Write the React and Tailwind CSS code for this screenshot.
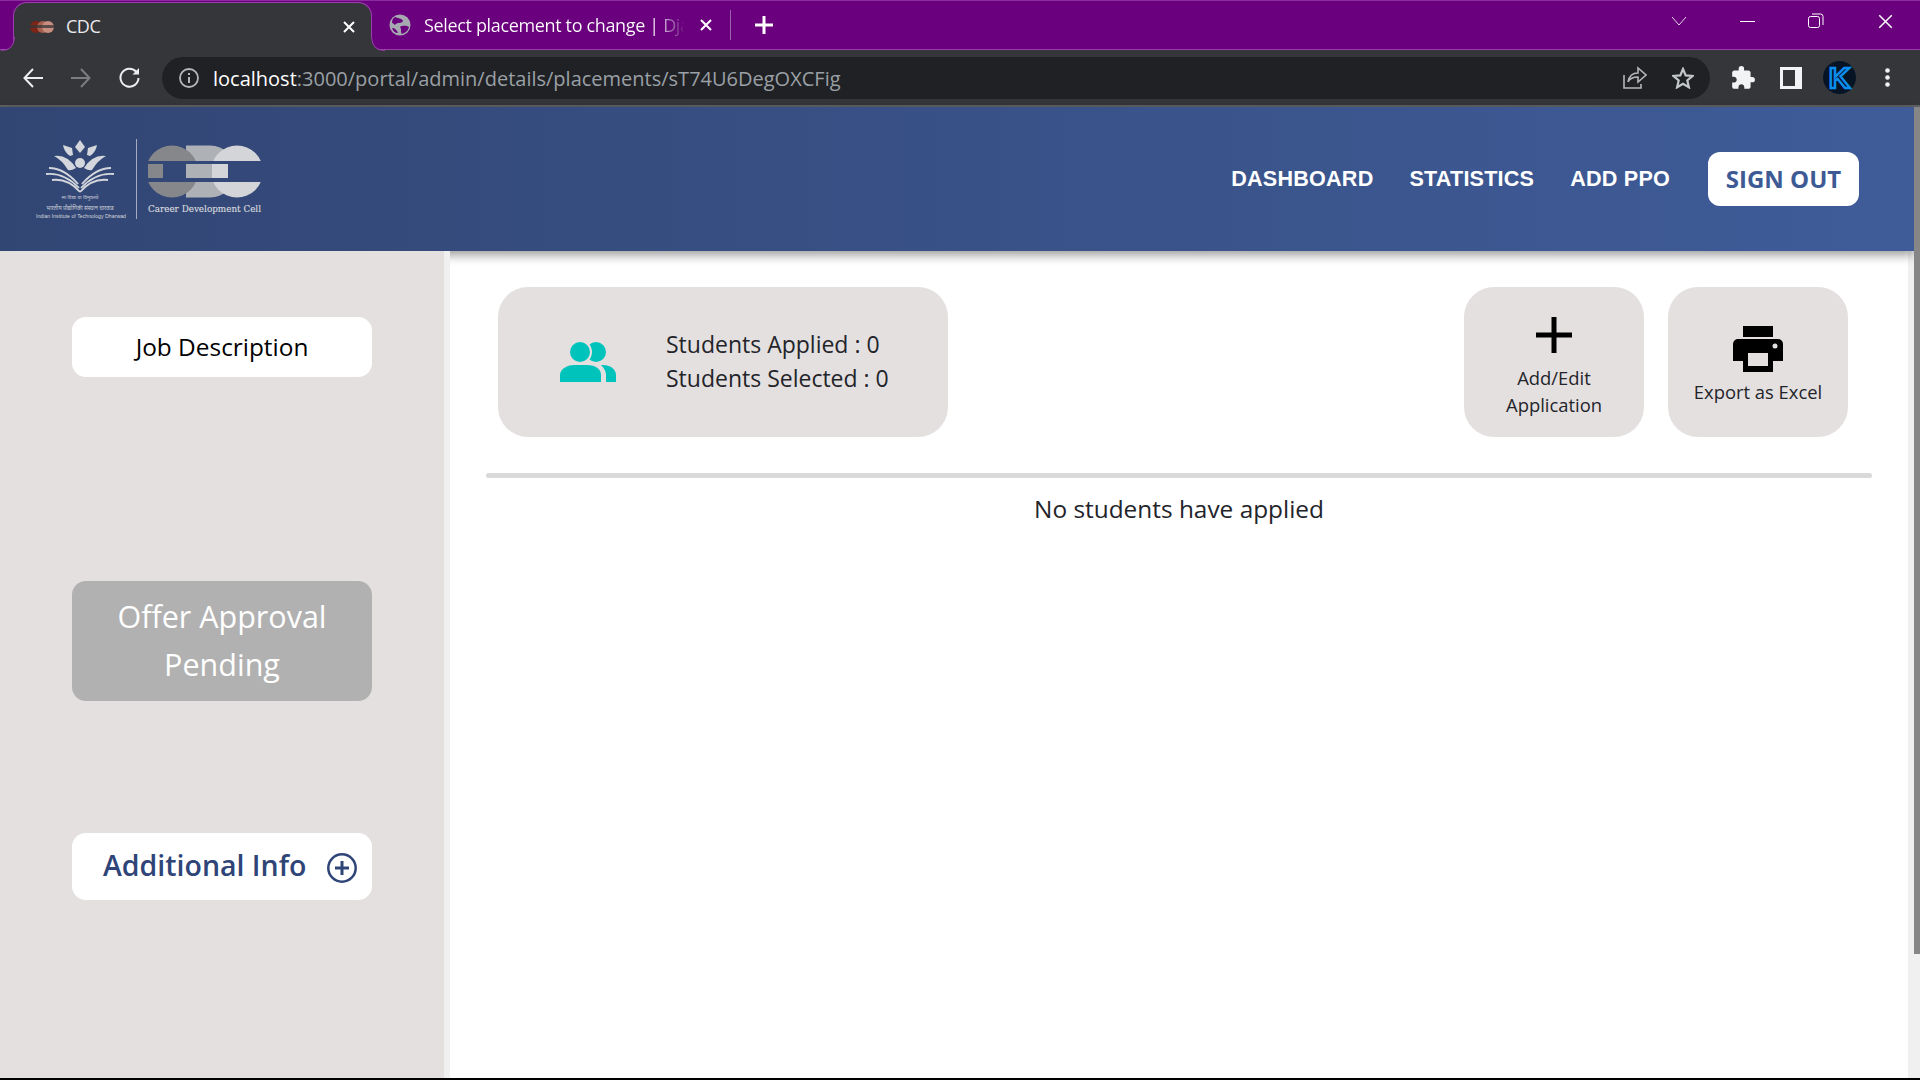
import React from "react";
import { MdExtension } from "react-icons/md";

const Close = ({ size = 12, sw = 2 }) => (
  <svg width={size} height={size} viewBox="0 0 12 12" fill="none" stroke="#fff" strokeWidth={sw}>
    <path d="M1 1 L11 11 M11 1 L1 11" />
  </svg>
);

const Flare = ({ flip }) => (
  <svg width="14" height="14" viewBox="0 0 14 14" className={flip ? "absolute bottom-0 left-[-13px]" : "absolute bottom-0 right-[-14px]"}>
    {flip ? (
      <>
        <path d="M0 14 Q13 14 13 0 H14 V14 Z" fill="#35363a" />
        <path d="M0 13.5 Q13 13.5 13.5 0" fill="none" stroke="#9c3fae" />
      </>
    ) : (
      <>
        <path d="M14 14 Q1 14 1 0 H0 V14 Z" fill="#35363a" />
        <path d="M14 13.5 Q1 13.5 0.5 0" fill="none" stroke="#9c3fae" />
      </>
    )}
  </svg>
);

const Favicon = () => (
  <svg width="24" height="14" viewBox="0 0 24 14">
    <circle cx="6" cy="7" r="6" fill="#7c2417" />
    <circle cx="13" cy="7" r="6" fill="#a8604e" />
    <circle cx="18" cy="7" r="6" fill="#c98e7f" />
    <rect x="0" y="5" width="24" height="3" fill="#35363a" opacity="0.75" />
  </svg>
);

const Globe = () => (
  <svg width="22" height="22" viewBox="0 0 22 22" className="shrink-0">
    <circle cx="11" cy="11" r="10.5" fill="#a7a9b1" />
    <path d="M6 3 C10 5 13 4 14 7 C12 10 9 8 7 10 C5 12 5 9 3 9 C3 6 4 4 6 3Z M11 13 C14 11 18 12 20 13 C19 17 16 19 13 20 C11 18 13 16 11 13Z M3 14 C6 14 8 16 9 19 C6 19 4 17 3 14Z" fill="#6a007d" />
  </svg>
);

const Logo = () => (
  <svg width="240" height="92" viewBox="30 135 240 92" className="block">
    <defs>
      <clipPath id="slot">
        <rect x="140" y="140" width="130" height="21" />
        <rect x="140" y="182" width="130" height="22" />
      </clipPath>
    </defs>
    <g fill="#d3d6dc">
      <path d="M80 140 L85 147 L80 153 L75 147Z" />
      <path d="M63 145 L72 148 L73 155 L70 156 Q64 152 63 145Z" />
      <path d="M97 145 L88 148 L87 155 L90 156 Q96 152 97 145Z" />
      <circle cx="80" cy="163" r="5" />
      <path d="M54 156 Q67 154 76 168 Q71 171 68 170 Q62 160 54 156Z" />
      <path d="M106 156 Q93 154 84 168 Q89 171 92 170 Q98 160 106 156Z" />
    </g>
    <g fill="none" stroke="#d3d6dc" strokeWidth="1.8">
      <path d="M49 168 Q64 168 78 184" />
      <path d="M46 174 Q64 172 79 188" />
      <path d="M52 180 Q68 178 80 192" />
      <path d="M111 168 Q96 168 82 184" />
      <path d="M114 174 Q96 172 81 188" />
      <path d="M108 180 Q92 178 80 192" />
    </g>
    <text x="80" y="199" textAnchor="middle" fontSize="5" fill="#c8ccd6" fontFamily="'Noto Sans',sans-serif">सा विद्या या विमुक्तये</text>
    <text x="80" y="210" textAnchor="middle" fontSize="5.5" fill="#c8ccd6" fontFamily="'Noto Sans',sans-serif">भारतीय प्रौद्योगिकी संस्थान धारवाड</text>
    <text x="36" y="218" fontSize="6" textLength="90" lengthAdjust="spacingAndGlyphs" fill="#d3d6dc" fontFamily="'Liberation Sans',sans-serif">Indian Institute of Technology Dharwad</text>
    <rect x="136" y="139" width="1" height="80" fill="#a3abbe" />
    <g clipPath="url(#slot)">
      <path d="M186 145.5 H210 A26 26 0 0 1 210 197.5 H186Z" fill="#aeb1b6" />
      <circle cx="172" cy="171.5" r="26" fill="#85878a" />
      <circle cx="237" cy="171.5" r="26" fill="#d3d5d8" />
    </g>
    <rect x="148" y="164" width="15" height="14" fill="#85878a" />
    <rect x="186" y="164" width="26" height="14" fill="#aeb1b6" />
    <rect x="212" y="164" width="16" height="14" fill="#d3d5d8" />
    <text x="148" y="212" fontSize="10" textLength="113" lengthAdjust="spacingAndGlyphs" fill="#d5d7dc" stroke="#d5d7dc" strokeWidth="0.2" fontFamily="'DejaVu Serif',serif">Career Development Cell</text>
  </svg>
);

const People = () => (
  <svg width="56" height="40" viewBox="0 0 56 40" className="shrink-0">
    <circle cx="36" cy="10" r="10" fill="#00c4bc" />
    <circle cx="20" cy="10" r="12" fill="#e4e0e0" />
    <circle cx="20" cy="10" r="10" fill="#00c4bc" />
    <path d="M0 40 V33 C0 26 9 23 14 23 H27 C34 23 41 26 41 33 V40Z" fill="#00c4bc" />
    <path d="M41 23 H43 C50 23 56 27 56 33 V40 H46 V33 C46 29 44 26 41 23Z" fill="#00c4bc" />
  </svg>
);

const Printer = () => (
  <svg width="50" height="46" viewBox="0 0 50 46">
    <rect x="10" y="0" width="30" height="11" fill="#000" />
    <path fillRule="evenodd" d="M5 13 H45 A5 5 0 0 1 50 18 V35 H40 V46 H10 V35 H0 V18 A5 5 0 0 1 5 13Z M15 27 H35 V40 H15Z" fill="#000" />
    <circle cx="42" cy="20" r="2.5" fill="#e4e0e0" />
  </svg>
);

const PlusBig = () => (
  <svg width="36" height="36" viewBox="0 0 36 36">
    <path d="M15.5 0 H20.5 V15.5 H36 V20.5 H20.5 V36 H15.5 V20.5 H0 V15.5 H15.5Z" fill="#000" />
  </svg>
);

const CirclePlus = () => (
  <svg width="30" height="30" viewBox="0 0 30 30" fill="none" stroke="#2f4577" strokeWidth="2.5" className="shrink-0">
    <circle cx="15" cy="15" r="13.7" />
    <path d="M15 8 V22 M8 15 H22" strokeWidth="3" />
  </svg>
);

export default function App() {
  return (
    <div className="relative w-[1920px] h-[1080px] overflow-hidden bg-black flex flex-col [font-family:'Open_Sans',sans-serif]">
      {/* tab strip */}
      <div className="h-[50px] shrink-0 bg-[#6a007d] border-t border-t-[#8c2aa0] border-b border-b-[#9c3fae] flex items-stretch">
        <div className="relative ml-[13px] w-[359px] h-[49px] mt-[1px] z-10 bg-[#35363a] rounded-t-[14px] border border-b-0 border-[#9c3fae] flex items-center pl-[16px] pr-[16px]">
          <Flare flip />
          <Flare />
          <Favicon />
          <span className="ml-[12px] mt-[-2px] text-[18px] text-[#e8eaed] tracking-[-0.5px]">CDC</span>
          <span className="ml-auto flex"><Close /></span>
        </div>
        <div className="w-[420px] shrink-0 pl-[17px] flex items-center">
          <Globe />
          <span className="ml-[13px] w-[260px] shrink-0 text-[18px] whitespace-nowrap overflow-hidden tracking-[-0.35px] bg-clip-text text-transparent bg-gradient-to-r from-white from-[88%] to-[#6a007d]">Select placement to change | Django site admin</span>
          <span className="ml-[16px] flex shrink-0"><Close /></span>
          <span className="ml-[18px] w-px h-[30px] shrink-0 bg-[#9c5fae]" />
          <svg width="18" height="18" viewBox="0 0 18 18" className="ml-[24px] shrink-0"><path d="M7.5 0 H10.5 V7.5 H18 V10.5 H10.5 V18 H7.5 V10.5 H0 V7.5 H7.5Z" fill="#fff" /></svg>
        </div>
        <div className="ml-auto flex items-center pb-[8px]">
          <svg width="16" height="10" viewBox="0 0 16 10" fill="none" stroke="#e8d6ec" strokeWidth="1"><path d="M1 1 L8 9 L15 1" /></svg>
          <span className="ml-[53px] w-[15px] h-px bg-white" />
          <svg width="16" height="16" viewBox="0 0 16 16" fill="none" stroke="#fff" strokeWidth="1" className="ml-[53px]">
            <rect x="0.5" y="3.5" width="11" height="11" rx="2" />
            <path d="M4 1 H12.5 A2.5 2.5 0 0 1 15 3.5 V12" />
          </svg>
          <span className="ml-[54px] mr-[27px] flex"><Close size={15} sw={1.2} /></span>
        </div>
      </div>

      {/* toolbar */}
      <div className="h-[57px] shrink-0 bg-[#35363a] border-b-2 border-b-[#5f6063] flex items-center pl-[23px]">
        <svg width="20" height="20" viewBox="0 0 20 20" fill="none" stroke="#eceef0" strokeWidth="2"><path d="M20 10 H2 M10 1 L1.5 10 L10 19" /></svg>
        <svg width="20" height="20" viewBox="0 0 20 20" fill="none" stroke="#7b7d80" strokeWidth="2" className="ml-[28px]"><path d="M0 10 H18 M10 1 L18.5 10 L10 19" /></svg>
        <svg width="21" height="21" viewBox="0 0 21 21" fill="none" stroke="#eceef0" strokeWidth="2" className="ml-[28px]">
          <path d="M17.5 5 A9 9 0 1 0 19.5 11" />
          <path d="M20 1 V7.5 H13.5 Z" fill="#eceef0" stroke="none" />
        </svg>
        <div className="ml-[22px] w-[1548px] h-[42px] rounded-full bg-[#202124] flex items-center pl-[17px] pr-[16px]">
          <svg width="20" height="20" viewBox="0 0 20 20" fill="none" stroke="#b4b6b9" strokeWidth="1.8" className="shrink-0">
            <circle cx="10" cy="10" r="9" />
            <path d="M10 9 V15 M10 5 V7" strokeWidth="2" />
          </svg>
          <span className="ml-[14px] mt-[3px] text-[20px] whitespace-nowrap text-[#9aa0a6]"><span className="text-white">localhost</span>:3000/portal/admin/details/placements/sT74U6DegOXCFig</span>
          <svg width="24" height="23" viewBox="0 0 24 23" fill="none" stroke="#b4b6b9" strokeWidth="1.6" className="ml-auto">
            <path d="M1 9 V22 H18 V18" />
            <path d="M5 16 C6 10 10 7 15 7 V2 L23 9 L15 16 V11 C11 11 7 12 5 16Z" />
          </svg>
          <svg width="22" height="22" viewBox="0 0 22 22" fill="none" stroke="#c4c7c9" strokeWidth="2.2" className="ml-[25px]">
            <path d="M11 2 L13.7 8.4 L20.5 9 L15.3 13.5 L16.9 20.3 L11 16.7 L5.1 20.3 L6.7 13.5 L1.5 9 L8.3 8.4Z" />
          </svg>
        </div>
        <MdExtension size={26} color="#f1f3f4" className="ml-[20px]" />
        <svg width="22" height="22" viewBox="0 0 22 22" className="ml-[24px]">
          <path fillRule="evenodd" d="M0 0 H22 V22 H0Z M3 3 V19 H15 V3Z" fill="#f1f3f4" />
        </svg>
        <svg width="33" height="33" viewBox="0 0 33 33" className="ml-[21px]">
          <circle cx="16.5" cy="16.5" r="16.5" fill="#071426" />
          <text x="16.5" y="27" textAnchor="middle" fontSize="30" fontWeight="700" fill="none" stroke="#0c8df0" strokeWidth="2.4" fontFamily="'Liberation Sans',sans-serif">K</text>
        </svg>
        <svg width="5" height="19" viewBox="0 0 5 19" fill="#f1f3f4" className="ml-[29px]">
          <circle cx="2.5" cy="2.5" r="2.3" /><circle cx="2.5" cy="9.5" r="2.3" /><circle cx="2.5" cy="16.5" r="2.3" />
        </svg>
      </div>

      {/* site header */}
      <header className="relative z-10 h-[144px] w-[1914px] shrink-0 bg-gradient-to-r from-[#324674] to-[#3f5c99] shadow-[0_4px_10px_rgba(0,0,0,0.4)] flex items-start">
        <div className="mt-[28px] ml-[30px]"><Logo /></div>
        <nav className="ml-auto mt-[45px] mr-[55px] flex items-center [font-family:'Liberation_Sans',sans-serif] font-bold text-white text-[21.6px] tracking-[0.2px]">
          <a>DASHBOARD</a>
          <a className="ml-[36px]">STATISTICS</a>
          <a className="ml-[36px]">ADD PPO</a>
          <button className="ml-[38px] w-[151px] h-[54px] rounded-[12px] bg-white text-[#3e5a95] text-[24px] font-bold tracking-normal [font-family:'Open_Sans',sans-serif]">SIGN OUT</button>
        </nav>
      </header>

      {/* body */}
      <div className="h-[827px] shrink-0 flex bg-white">
        <aside className="relative z-20 w-[450px] shrink-0 bg-[#e4e0e0] border-r-[6px] border-r-[#f0f0f0] pt-[66px] pl-[72px]">
          <div className="w-[300px] h-[60px] rounded-[14px] bg-white flex items-center justify-center text-[24.4px] text-black">Job Description</div>
          <div className="mt-[204px] w-[300px] h-[120px] rounded-[14px] bg-[#b1b1b1] flex items-center justify-center text-center text-[30.5px] leading-[48px] text-white px-[20px] pb-[2px]">Offer Approval Pending</div>
          <div className="mt-[132px] w-[300px] h-[67px] rounded-[14px] bg-white flex items-center pl-[31px] text-[28.5px] font-semibold text-[#2f4577]">
            <span className="mt-[-2px]">Additional Info</span>
            <span className="ml-[21px] mt-[2px] flex"><CirclePlus /></span>
          </div>
        </aside>
        <main className="flex-1 px-[36px] pt-[36px] text-[#23242a]">
          <div className="flex items-stretch pl-[12px] pr-[24px] gap-[24px]">
            <div className="w-[450px] h-[150px] rounded-[30px] bg-[#e4e0e0] flex items-center pl-[62px]">
              <People />
              <div className="ml-[50px] mt-[-2px] text-[23px] leading-[34px]">
                <div>Students Applied : 0</div>
                <div>Students Selected : 0</div>
              </div>
            </div>
            <div className="ml-auto w-[180px] h-[150px] rounded-[30px] bg-[#e4e0e0] flex flex-col items-center pt-[30px] text-[18.4px] leading-[27px] text-center">
              <PlusBig />
              <div className="mt-[11px]">Add/Edit<br />Application</div>
            </div>
            <div className="w-[180px] h-[150px] rounded-[30px] bg-[#e4e0e0] flex flex-col items-center pt-[39px] text-[18.4px] leading-[27px]">
              <Printer />
              <div className="mt-[6px]">Export as Excel</div>
            </div>
          </div>
          <div className="mt-[36px] h-[5px] rounded-full bg-[#d9d9d9]" />
          <div className="mt-[13px] text-center text-[24.4px] leading-[36px]">No students have applied</div>
        </main>
        <div className="w-[12px] shrink-0 bg-[#f0f0f0]" />
      </div>

      {/* scrollbar thumb */}
      <div className="absolute z-30 left-[1914px] top-[107px] w-[6px] h-[847px] bg-[#868686]" />
    </div>
  );
}
